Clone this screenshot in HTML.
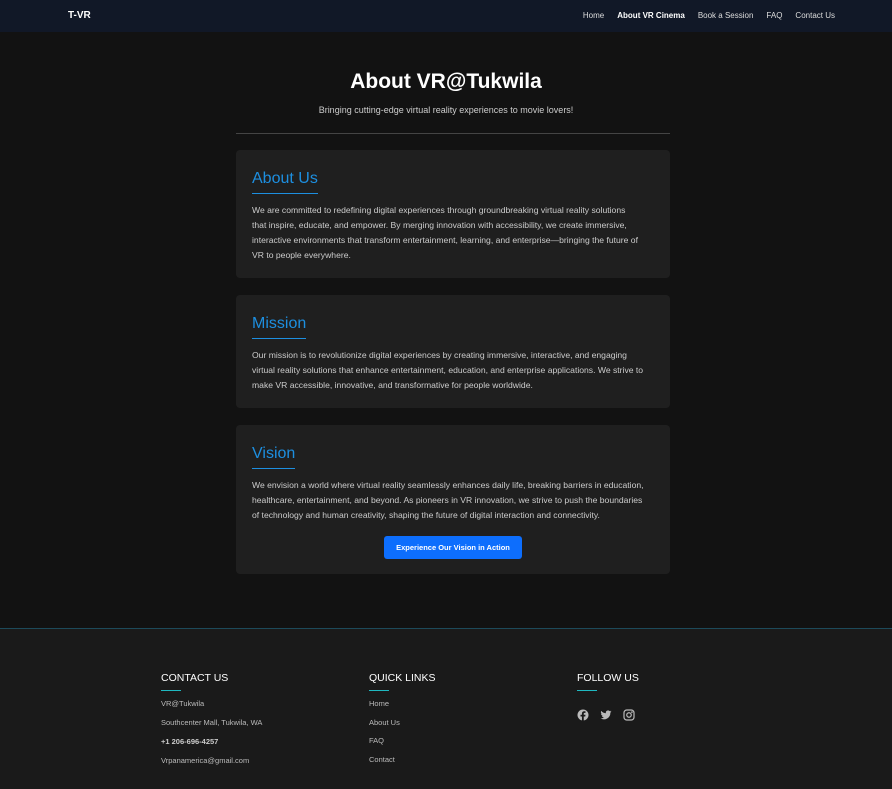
<!DOCTYPE html>
<html><head><meta charset="utf-8"><style>
*{margin:0;padding:0;box-sizing:border-box}
body{width:892px;height:789px;background:#121212;font-family:"Liberation Sans",sans-serif;color:#ddd;position:relative;overflow:hidden}
.nav{position:absolute;left:0;top:0;width:892px;height:32px;background:#111827}
.nav .brand{position:absolute;left:68px;top:10px;font-size:10px;font-weight:bold;color:#fff}
.nav .links{position:absolute;right:57px;top:11px;font-size:8px;color:#ddd;white-space:nowrap}
.nav .links span{margin-left:13px}
.nav .links b{color:#fff;margin-left:13px}
h1{position:absolute;left:0;width:892px;top:70px;text-align:center;font-size:21px;color:#fff;font-weight:bold}
.sub{position:absolute;left:0;width:892px;top:105px;text-align:center;font-size:9px;color:#ccc}
.hr{position:absolute;left:236px;top:133px;width:434px;height:1px;background:#444}
.card{position:absolute;left:236px;width:434px;background:#1f1f1f;border-radius:4px;padding:0 16px}
.card h2{font-weight:normal;color:#1d8fe0;font-size:16px;margin-top:20px;display:inline-block;padding-bottom:5px;border-bottom:1px solid #1d8fe0}
.card p{font-size:8.6px;line-height:15px;color:#ccc;margin-top:9px;white-space:nowrap}
.btn{position:absolute;left:148px;top:111px;width:138px;height:23px;background:#0d6efd;border-radius:3px;color:#fff;font-size:7.5px;font-weight:bold;text-align:center;line-height:23px}
.footer{position:absolute;left:0;top:628px;width:892px;height:161px;background:#1a1a1a;border-top:1px solid #1d4a5a}
.col{position:absolute;top:43px}
.col h3{font-weight:normal;font-size:10.5px;color:#fff}
.col .u{width:20px;height:1px;background:#1fb8c0;margin-top:6px}
.col div.i{font-size:7.5px;color:#bbb;height:19px}
</style></head><body>
<div class="nav"><div class="brand">T-VR</div><div class="links"><span>Home</span><b>About VR Cinema</b><span>Book a Session</span><span>FAQ</span><span>Contact Us</span></div></div>
<h1>About VR@Tukwila</h1>
<div class="sub">Bringing cutting-edge virtual reality experiences to movie lovers!</div>
<div class="hr"></div>
<div class="card" style="top:150px;height:128px"><h2>About Us</h2><p>We are committed to redefining digital experiences through groundbreaking virtual reality solutions<br>that inspire, educate, and empower. By merging innovation with accessibility, we create immersive,<br>interactive environments that transform entertainment, learning, and enterprise—bringing the future of<br>VR to people everywhere.</p></div>
<div class="card" style="top:295px;height:113px"><h2>Mission</h2><p>Our mission is to revolutionize digital experiences by creating immersive, interactive, and engaging<br>virtual reality solutions that enhance entertainment, education, and enterprise applications. We strive to<br>make VR accessible, innovative, and transformative for people worldwide.</p></div>
<div class="card" style="top:425px;height:149px"><h2>Vision</h2><p>We envision a world where virtual reality seamlessly enhances daily life, breaking barriers in education,<br>healthcare, entertainment, and beyond. As pioneers in VR innovation, we strive to push the boundaries<br>of technology and human creativity, shaping the future of digital interaction and connectivity.</p><div class="btn">Experience Our Vision in Action</div></div>
<div class="footer">
<div class="col" style="left:161px"><h3>CONTACT US</h3><div class="u"></div><div style="height:8px"></div><div class="i">VR@Tukwila</div><div class="i">Southcenter Mall, Tukwila, WA</div><div class="i" style="font-weight:bold;color:#ccc">+1 206-696-4257</div><div class="i">Vrpanamerica@gmail.com</div></div>
<div class="col" style="left:369px"><h3>QUICK LINKS</h3><div class="u"></div><div style="height:8px"></div><div class="i" style="height:18.5px">Home</div><div class="i" style="height:18.5px">About Us</div><div class="i" style="height:18.5px">FAQ</div><div class="i">Contact</div></div>
<div class="col" style="left:577px"><h3>FOLLOW US</h3><div class="u"></div>
<div style="margin-top:18px;display:flex;gap:11px">
<svg width="12" height="12" viewBox="0 0 24 24"><circle cx="12" cy="12" r="11" fill="#bbb"/><path d="M13.5 24V15h3l.5-3.5h-3.5V9.5c0-1 .3-1.7 1.8-1.7H17V4.7c-.3 0-1.4-.2-2.7-.2-2.7 0-4.4 1.6-4.4 4.6v2.4H7V15h2.9v9z" fill="#1a1a1a"/></svg>
<svg width="12" height="12" viewBox="0 0 24 24"><path d="M23 5c-.8.4-1.7.6-2.6.7.9-.6 1.6-1.4 2-2.5-.9.5-1.9.9-2.9 1.1A4.5 4.5 0 0 0 11.8 8.4 12.8 12.8 0 0 1 2.5 3.7a4.5 4.5 0 0 0 1.4 6c-.7 0-1.4-.2-2-.6 0 2.2 1.6 4 3.6 4.4-.7.2-1.4.2-2 .1.6 1.800 2.2 3.1 4.2 3.1A9 9 0 0 1 1 18.6 12.8 12.8 0 0 0 20.7 7.2c.9-.6 1.6-1.4 2.3-2.2z" fill="#bbb"/></svg>
<svg width="12" height="12" viewBox="0 0 24 24" fill="none" stroke="#bbb" stroke-width="2.4"><rect x="2" y="2" width="20" height="20" rx="5.5"/><circle cx="12" cy="12" r="4.5"/><circle cx="17.8" cy="6.2" r=".6" fill="#bbb"/></svg>
</div></div>
</div>
</body></html>
